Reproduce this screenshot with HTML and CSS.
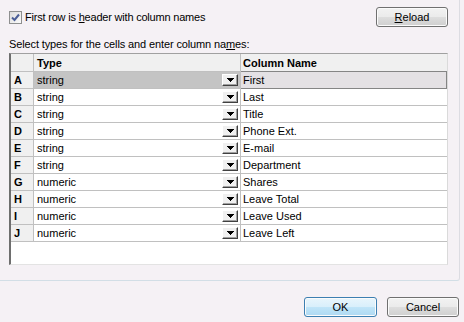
FILE: index.html
```html
<!DOCTYPE html>
<html lang="en">
<head>
    <meta charset="UTF-8">
    <title>Import Columns</title>
    <link rel="stylesheet" href="styles.css">
</head>
<body>
    <div class="dialog">
        <div class="panel">
            <div class="top">
                <label class="check">
                    <span class="box">
                        <svg width="11" height="11" viewBox="0 0 11 11"><path d="M2 5.5 L4.5 8 L9 2.5" fill="none" stroke="#4b5e97" stroke-width="2"/></svg>
                    </span>
                    <span>First row is <u>h</u>eader with column names</span>
                </label>
                <button class="btn reload"><u>R</u>eload</button>
            </div>
            <p class="hint">Select types for the cells and enter column na<u>m</u>es:</p>
            <div class="grid">
                <table>
                    <colgroup>
                        <col class="c-rh">
                        <col class="c-type">
                        <col>
                    </colgroup>
                    <thead>
                        <tr>
                            <th class="rh"></th>
                            <th>Type</th>
                            <th class="name">Column Name</th>
                        </tr>
                    </thead>
                    <tbody id="rows"></tbody>
                </table>
            </div>
        </div>
        <div class="footer">
            <button class="btn ok">OK</button>
            <button class="btn cancel">Cancel</button>
        </div>
    </div>

    <script>
        const columns = [
            ['A', 'string', 'First'],
            ['B', 'string', 'Last'],
            ['C', 'string', 'Title'],
            ['D', 'string', 'Phone Ext.'],
            ['E', 'string', 'E-mail'],
            ['F', 'string', 'Department'],
            ['G', 'numeric', 'Shares'],
            ['H', 'numeric', 'Leave Total'],
            ['I', 'numeric', 'Leave Used'],
            ['J', 'numeric', 'Leave Left']
        ];
        const arrow = '<svg width="7" height="4" viewBox="0 0 7 4"><path d="M0 0h7v1H0zM1 1h5v1H1zM2 2h3v1H2zM3 3h1v1H3z"/></svg>';
        const rows = document.getElementById('rows');

        columns.forEach(function (col, i) {
            const tr = document.createElement('tr');
            if (i === 0) tr.className = 'current';
            tr.innerHTML =
                '<th class="rh">' + col[0] + '</th>' +
                '<td class="type"><div class="cell"><span>' + col[1] + '</span><span class="drop">' + arrow + '</span></div></td>' +
                '<td class="name">' + col[2] + '</td>';
            rows.appendChild(tr);
        });
    </script>
</body>
</html>
```

FILE: styles.css
```css
* {
    box-sizing: border-box;
}

body {
    margin: 0;
    background-color: #f5f1f5;
    font-family: "Liberation Sans", Arial, sans-serif;
    font-size: 11px;
    color: #000;
}

.dialog {
    width: 464px;
    height: 322px;
}

.panel {
    width: 460px;
    height: 281px;
    padding: 7px 11px 0 9px;
    border-right: 1px solid #dcdce2;
    border-bottom: 1px solid #d2dee6;
    border-bottom-right-radius: 3px;
}

.top {
    display: flex;
    justify-content: space-between;
    align-items: center;
    height: 20px;
}

.check {
    display: flex;
    align-items: center;
    gap: 3px;
    letter-spacing: -0.2px;
}

.box {
    width: 13px;
    height: 13px;
    border: 1px solid #8e8f8f;
    background: linear-gradient(135deg, #dcdcdc, #fbfbfb);
    display: flex;
    align-items: center;
    justify-content: center;
}

.btn {
    height: 20px;
    width: 72px;
    padding: 0;
    border: 1px solid #707070;
    border-radius: 3px;
    background: linear-gradient(#f2f2f2 0%, #ebebeb 48%, #dddddd 52%, #cfcfcf 100%);
    box-shadow: inset 0 0 0 1px #fbfbfb;
    font: inherit;
    color: #000;
}

.hint {
    margin: 11px 0 2px;
    line-height: 13px;
    letter-spacing: -0.12px;
}

.grid {
    height: 212px;
    background-color: #fff;
    border-top: 1px solid #a0a0a0;
    border-left: 2px solid #6e6e6e;
    border-right: 1px solid #dadada;
    border-bottom: 1px solid #e3e3e3;
}

table {
    width: 436px;
    table-layout: fixed;
    border-collapse: separate;
    border-spacing: 0;
}

.c-rh {
    width: 23px;
}

.c-type {
    width: 207px;
}

th,
td {
    height: 17px;
    padding: 0 0 0 3px;
    border-right: 1px solid #c0c0c0;
    border-bottom: 1px solid #c0c0c0;
    text-align: left;
    white-space: nowrap;
    line-height: 16px;
    font-weight: normal;
}

thead th {
    height: 18px;
    background-color: #f0f0f0;
    font-weight: bold;
}

th.rh {
    background-color: #f0f0f0;
    font-weight: bold;
}

td.type {
    padding-right: 2px;
}

.name {
    border-right: none;
    padding-left: 2px;
}

thead .name {
    border-bottom-color: #858585;
}

.cell {
    display: flex;
    justify-content: space-between;
    align-items: center;
}

.drop {
    width: 16px;
    height: 12px;
    background-color: #f0f0f0;
    border: 1px solid;
    border-color: #fff #404040 #404040 #fff;
    box-shadow: inset -1px -1px #a0a0a0;
    display: flex;
    align-items: center;
    justify-content: center;
}

.current td.type {
    background-color: #c4c4c4;
}

.current td.name {
    background-color: #e4e1e4;
    border-bottom-color: #858585;
    box-shadow: inset -1px 0 #858585;
}

.footer {
    display: flex;
    justify-content: flex-end;
    gap: 10px;
    padding: 16px 5px 0 0;
}

.ok {
    width: 73px;
    border-color: #3c7fb1;
    background: linear-gradient(#e8f5fc 0%, #d9effb 48%, #bfe4f8 52%, #aed9f2 100%);
}
```
